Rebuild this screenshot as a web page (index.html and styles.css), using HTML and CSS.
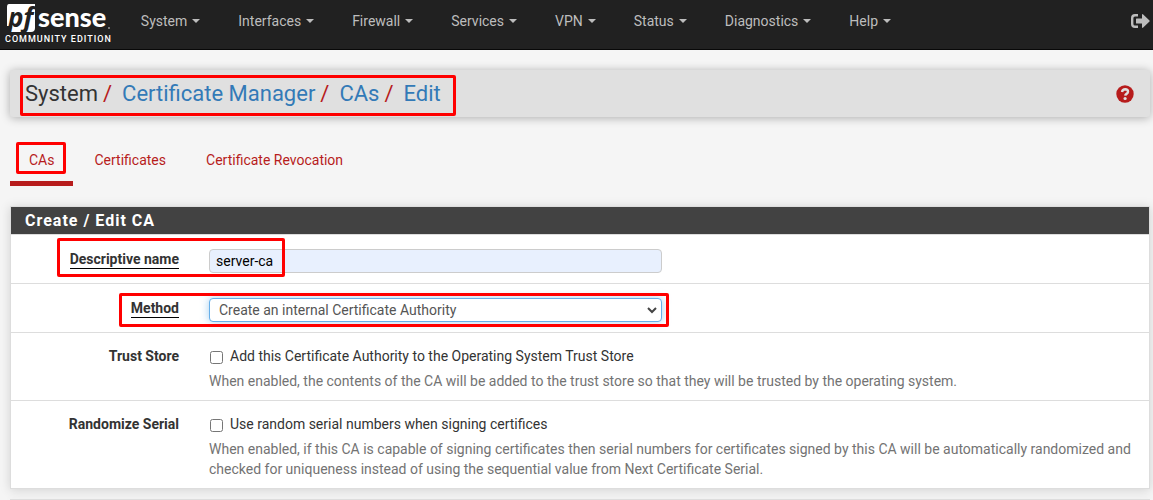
FILE: index.html
```html
<!DOCTYPE html>
<html lang="en">
<head>
<meta charset="utf-8">
<meta name="viewport" content="width=device-width, initial-scale=1">
<title>System: Certificate Manager: CAs: Edit</title>
<link rel="stylesheet" href="styles.css">
</head>
<body>
<header class="navbar">
  <a class="brand" href="#" aria-label="pfSense Community Edition">
    <svg class="logo" viewBox="0 0 106 30" width="106" height="30" aria-hidden="true">
      <path class="logo-tile" d="M4 0H30V24Q30 28 26 28H5L7 22H2V3Q2 0 4 0Z"/>
      <text class="logo-pf" x="3" y="23">pf</text>
      <text class="logo-sense" x="33" y="23">sense</text>
      <circle class="logo-dot" cx="104" cy="24" r="1"/>
    </svg>
    <span class="edition">COMMUNITY EDITION</span>
  </a>
  <nav class="menu">
    <a href="#">System<i class="caret"></i></a>
    <a href="#">Interfaces<i class="caret"></i></a>
    <a href="#">Firewall<i class="caret"></i></a>
    <a href="#">Services<i class="caret"></i></a>
    <a href="#">VPN<i class="caret"></i></a>
    <a href="#">Status<i class="caret"></i></a>
    <a href="#">Diagnostics<i class="caret"></i></a>
    <a href="#">Help<i class="caret"></i></a>
  </nav>
  <a class="logout" href="#" aria-label="Log out">
    <svg viewBox="0 0 19 14" width="19" height="14"><path d="M7 1.200H4Q1.200 1.200 1.200 4V10Q1.200 12.800 4 12.800H7" fill="none" stroke="currentColor" stroke-width="2.400"/><path d="M5.500 4.500H11V.5Q11.500-.2 12.200.4L18.500 6.500Q18.900 7 18.500 7.500L12.200 13.600Q11.500 14.200 11 13.500V9.500H5.500Q5 9.500 5 9V5Q5 4.500 5.500 4.500Z" fill="currentColor"/></svg>
  </a>
</header>
<main class="page">
  <div class="page-head">
    <h1 class="crumbs"><span>System</span><b>/</b><a href="#">Certificate Manager</a><b>/</b><a href="#">CAs</a><b>/</b><a href="#">Edit</a></h1>
    <a class="help-link" href="#" aria-label="Help">
      <svg viewBox="0 0 18 18" width="18" height="18"><circle cx="9" cy="9" r="8.700" fill="currentColor"/><path d="M6 6.900Q6.500 4.300 9.200 4.300Q12 4.400 12 6.700Q12 8 10.500 8.900Q9.300 9.600 9.200 10.700" fill="none" stroke="#e0e0e0" stroke-width="2.400"/><circle cx="9.100" cy="13.500" r="1.600" fill="#e0e0e0"/></svg>
    </a>
    <span class="mark mark-crumbs"></span>
  </div>
  <nav class="tabs">
    <a class="tab active" href="#">CAs<span class="mark mark-tab"></span></a>
    <a class="tab" href="#">Certificates</a>
    <a class="tab" href="#">Certificate Revocation</a>
  </nav>
  <form class="panel">
    <h2 class="panel-title">Create / Edit CA</h2>
    <div class="row">
      <label class="name" for="descr"><span class="required">Descriptive name</span></label>
      <div class="field"><input class="control filled" id="descr" type="text" value="server-ca"></div>
      <span class="mark mark-name"></span>
    </div>
    <div class="row">
      <label class="name" for="method"><span class="required">Method</span></label>
      <div class="field">
        <div class="select-wrap">
          <select class="control focused" id="method"><option>Create an internal Certificate Authority</option></select>
          <svg class="chevron" viewBox="0 0 10 7" width="10" height="7" aria-hidden="true"><path d="M1 1L5 5L9 1" fill="none" stroke="#444" stroke-width="2"/></svg>
          <span class="mark mark-method"></span>
        </div>
      </div>
    </div>
    <div class="row row-check">
      <div class="name">Trust Store</div>
      <div class="field wide">
        <label class="check"><input type="checkbox">Add this Certificate Authority to the Operating System Trust Store</label>
        <p class="hint">When enabled, the contents of the CA will be added to the trust store so that they will be trusted by the operating system.</p>
      </div>
    </div>
    <div class="row row-check">
      <div class="name">Randomize Serial</div>
      <div class="field wide">
        <label class="check"><input type="checkbox">Use random serial numbers when signing certifices</label>
        <p class="hint">When enabled, if this CA is capable of signing certificates then serial numbers for certificates signed by this CA will be automatically randomized and checked for uniqueness instead of using the sequential value from Next Certificate Serial.</p>
      </div>
    </div>
  </form>
  <section class="panel panel-next"></section>
</main>
</body>
</html>
```
FILE: styles.css
```css
* { box-sizing: border-box; }
body {
  margin: 0;
  background: #f5f5f5;
  color: #333;
  font: 14px/20px Roboto, sans-serif;
}
a { text-decoration: none; color: inherit; }

.navbar {
  display: flex;
  align-items: flex-start;
  height: 50px;
  background: #212121;
  border-bottom: 1px solid #080808;
  color: #bdbdbd;
}
.brand { display: flex; flex-direction: column; padding: 4px 0 0 5px; }
.logo { display: block; overflow: visible; }
.logo-tile, .logo-sense { fill: #fff; }
.logo-pf { fill: #212121; font: italic 700 26px "Noto Sans", sans-serif; }
.logo-sense { font: 900 27px Lato, sans-serif; }
.logo-dot { fill: #999; }
.edition { color: #fff; font-size: 9px; line-height: 10px; font-weight: 500; letter-spacing: 1px; }
.menu { display: flex; gap: 38px; padding: 11px 0 0 29px; }
.menu a { display: flex; align-items: center; gap: 5px; }
.caret { border: 4px solid transparent; border-top-color: currentColor; border-bottom: 0; }
.logout { margin: 14px 3px 0 auto; }
.logout svg, .help-link svg { display: block; }

.page { padding: 20px 3px 0 10px; }
.page-head {
  position: relative;
  display: flex;
  align-items: center;
  justify-content: space-between;
  padding: 11px 16px 10px 15px;
  background: #e0e0e0;
  border-radius: 3px;
  box-shadow: 0 1px 10px rgba(0, 0, 0, 0.3);
}
.crumbs { display: flex; margin: 0; font-size: 22px; line-height: 26px; font-weight: 400; }
.crumbs a { color: #337ab7; }
.crumbs b { font-weight: 400; color: #b71c1c; margin: 0 10px 0 5px; }
.help-link { color: #b71c1c; }

.tabs { display: flex; gap: 2px; margin: 32px 0 20px; }
.tab { position: relative; padding: 1px 19px 11px; border-bottom: 5px solid transparent; color: #b71c1c; }
.tab.active { border-color: #b71c1c; }

.panel {
  margin: 0 0 10px;
  background: #fff;
  border: 1px solid #ddd;
  box-shadow: 0 1px 10px rgba(0, 0, 0, 0.15);
}
.panel-next { margin: 0; border-bottom: 0; }
.panel-title { margin: 0; padding: 4px 14px 3px; background: #424242; color: #fff; font-size: 16px; line-height: 20px; font-weight: 700; letter-spacing: 1px; }
.row {
  position: relative;
  display: grid;
  grid-template-columns: 2fr 5fr 5fr;
  margin: 0 -10px;
  padding: 15px 0 10px;
}
.row::before { content: ""; position: absolute; left: 10px; right: 10px; top: 0; border-top: 1px solid #ddd; }
.row-check { padding: 14px 0 9px; }
.name { padding-right: 15px; text-align: right; font-weight: 700; }
.required { display: inline-block; line-height: 18px; border-bottom: 1px solid #000; }
.field { padding: 0 15px; }
.wide { grid-column: span 2; }
.control {
  display: block;
  width: 100%;
  height: 24px;
  padding: 0 6px;
  border: 1px solid #ccc;
  border-radius: 4px;
  background: #fff;
  color: #555;
  font: inherit;
  outline: 0;
}
.filled { background: #e8f0fe; color: #000; }
.focused { appearance: none; padding: 0 9px; border-color: #66afe9; box-shadow: 0 0 8px rgba(102, 175, 233, 0.6); }
.select-wrap { position: relative; }
.chevron { position: absolute; right: 5px; top: 9px; }
.check { display: flex; align-items: center; gap: 7px; }
.check input { width: 13px; height: 13px; margin: 2px 0 0 1px; }
.hint { margin: 5px 0 0; color: #737373; }

.mark { position: absolute; border: 3px solid #f00; border-radius: 2px; pointer-events: none; }
.mark-crumbs { left: 10px; top: 5px; width: 436px; height: 41px; }
.mark-tab { left: 6px; top: -7px; width: 50px; height: 32px; }
.mark-name { left: 56px; top: 4px; width: 228px; height: 39px; }
.mark-method { left: -90px; right: -7px; top: -5px; height: 34px; }
```
